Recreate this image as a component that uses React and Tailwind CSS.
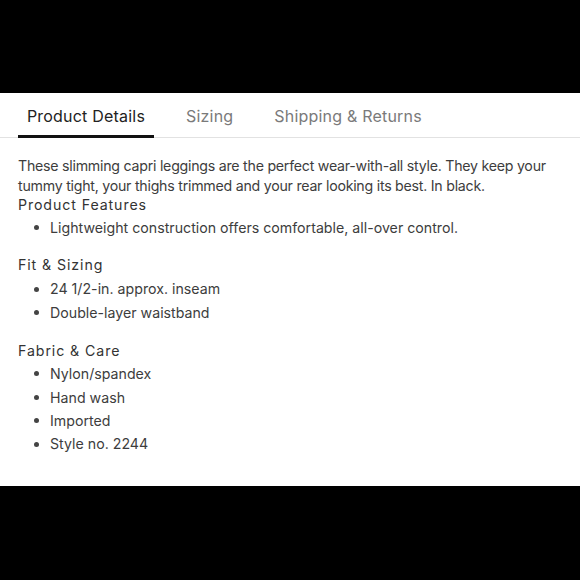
export default function App() {
  const font = { fontFamily: "Inter, 'Noto Sans', sans-serif" };
  const Bullet = ({ children }) => (
    <li className="flex items-center h-[23.4px] tracking-[0px]">
      <span className="w-[5px] h-[5px] rounded-full bg-[#444] ml-[16px] mr-[11px]" />
      <span>{children}</span>
    </li>
  );
  return (
    <div className="w-[580px] h-[580px] bg-black flex flex-col" style={font}>
      <div className="h-[93px] shrink-0" />
      <div className="h-[393px] shrink-0 bg-white flex flex-col">
        <div className="flex items-end h-[45px] border-b border-[#e2e2e2] pl-[18px] text-[16px] tracking-[0.2px]">
          <div className="w-[136px] h-full flex items-center justify-center text-[#222] border-b-[3px] border-[#111] -mb-px pt-[2px]">
            Product Details
          </div>
          <div className="h-full flex items-center ml-[32px] text-[#7a7a7a] pt-[1px]">Sizing</div>
          <div className="h-full flex items-center ml-[41px] text-[#7a7a7a] pt-[1px]">Shipping &amp; Returns</div>
        </div>
        <div className="px-[18px] pt-[18px] text-[14.2px] tracking-[-0.25px] text-[#3d3d3d] leading-[19.5px]">
          <p>
            These slimming capri leggings are the perfect wear-with-all style. They keep your tummy tight, your thighs trimmed and your rear looking its best. In black.
          </p>
          <h3 className="text-[#333] h-[20px] tracking-[0.9px]">Product Features</h3>
          <ul className="mt-[1px]">
            <Bullet>Lightweight construction offers comfortable, all-over control.</Bullet>
          </ul>
          <h3 className="text-[#333] mt-[14px] h-[23px] flex items-center tracking-[0.9px]">Fit &amp; Sizing</h3>
          <ul className="mt-[1px]">
            <Bullet>24 1/2-in. approx. inseam</Bullet>
            <Bullet>Double-layer waistband</Bullet>
          </ul>
          <h3 className="text-[#333] mt-[15px] h-[23px] flex items-center tracking-[0.9px]">Fabric &amp; Care</h3>
          <ul>
            <Bullet>Nylon/spandex</Bullet>
            <Bullet>Hand wash</Bullet>
            <Bullet>Imported</Bullet>
            <Bullet>Style no. 2244</Bullet>
          </ul>
        </div>
      </div>
      <div className="flex-1" />
    </div>
  );
}
